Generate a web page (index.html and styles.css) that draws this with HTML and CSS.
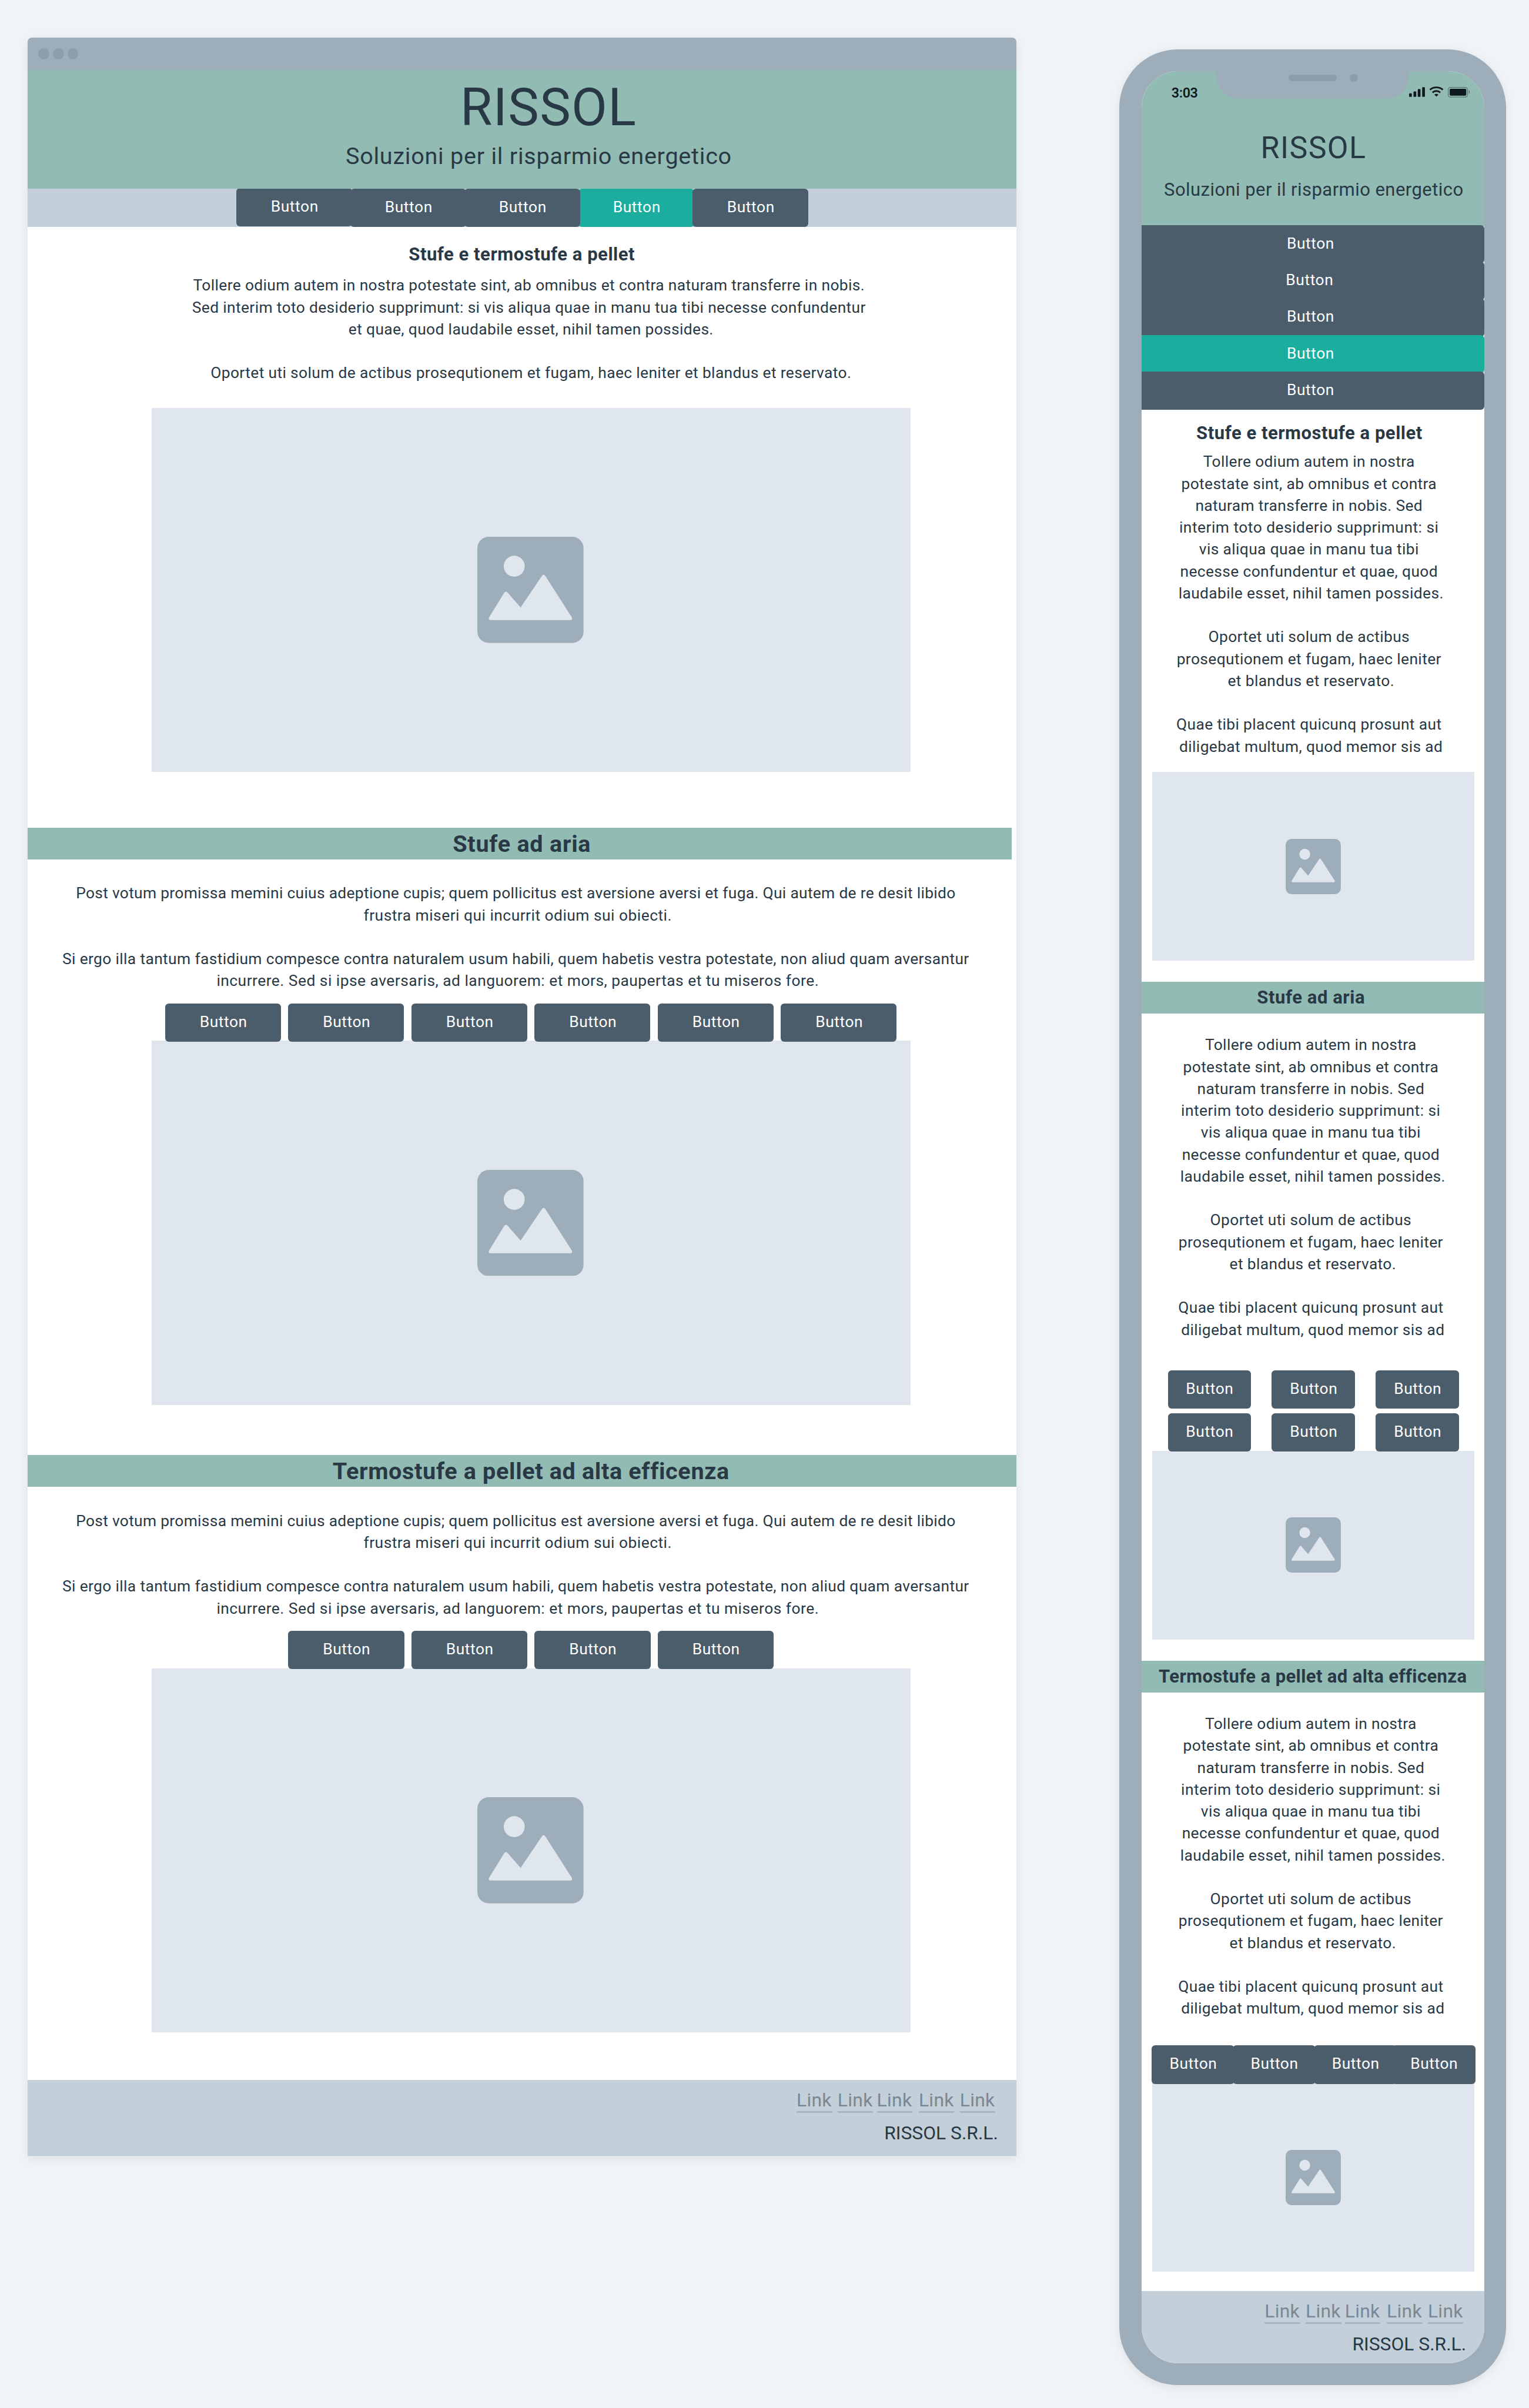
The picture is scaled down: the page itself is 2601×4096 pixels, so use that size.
FILE: index.html
```html
<!DOCTYPE html>
<html lang="it">
<head>
<meta charset="utf-8">
<title>RISSOL</title>
<link rel="stylesheet" href="styles.css">
</head>
<body>
<svg class="defs" aria-hidden="true">
  <symbol id="picture" viewBox="0 0 700 700">
    <rect class="pic-frame" width="700" height="700" rx="76"/>
    <circle class="pic-hole" cx="243" cy="194" r="69"/>
    <path class="pic-hole" d="M88 549H612C623 549 628 539 622 530L448 258C442 248 431 248 425 258L285 466L199 367C193 360 183 360 177 369L77 531C72 540 77 549 88 549Z"/>
  </symbol>
</svg>

<main class="browser">
  <div class="titlebar"><i class="dot"></i><i class="dot"></i><i class="dot"></i></div>
  <header class="hero">
    <h1 class="hero-title">RISSOL</h1>
    <p class="hero-sub">Soluzioni per il risparmio energetico</p>
  </header>
  <nav class="tabs">
    <a class="btn raised">Button</a><a class="btn">Button</a><a class="btn">Button</a><a class="btn active">Button</a><a class="btn">Button</a>
  </nav>

  <h2 class="intro">Stufe e termostufe a pellet</h2>
  <p class="copy">Tollere odium autem in nostra potestate sint, ab omnibus et contra naturam transferre in nobis. 
Sed interim toto desiderio supprimunt: si vis aliqua quae in manu tua tibi necesse confundentur 
et quae, quod laudabile esset, nihil tamen possides.

Oportet uti solum de actibus prosequtionem et fugam, haec leniter et blandus et reservato.</p>
  <div class="image"><svg class="pic"><use href="#picture"/></svg></div>

  <h2 class="banner first">Stufe ad aria</h2>
  <p class="copy wide"><span class="tight">Post votum promissa memini cuius adeptione cupis; quem pollicitus est aversione aversi et fuga. Qui autem de re desit libido </span>
<span class="loose">frustra miseri qui incurrit odium sui obiecti.</span>

Si ergo illa tantum fastidium compesce contra naturalem usum habili, quem habetis vestra potestate, non aliud quam aversantur 
<span class="loose">incurrere. Sed si ipse aversaris, ad languorem: et mors, paupertas et tu miseros fore.</span></p>
  <div class="buttons six">
    <a class="btn">Button</a><a class="btn">Button</a><a class="btn">Button</a><a class="btn">Button</a><a class="btn">Button</a><a class="btn">Button</a>
  </div>
  <div class="image tucked"><svg class="pic"><use href="#picture"/></svg></div>

  <h2 class="banner second">Termostufe a pellet ad alta efficenza</h2>
  <p class="copy wide"><span class="tight">Post votum promissa memini cuius adeptione cupis; quem pollicitus est aversione aversi et fuga. Qui autem de re desit libido </span>
<span class="loose">frustra miseri qui incurrit odium sui obiecti.</span>

Si ergo illa tantum fastidium compesce contra naturalem usum habili, quem habetis vestra potestate, non aliud quam aversantur 
<span class="loose">incurrere. Sed si ipse aversaris, ad languorem: et mors, paupertas et tu miseros fore.</span></p>
  <div class="buttons four">
    <a class="btn">Button</a><a class="btn">Button</a><a class="btn">Button</a><a class="btn">Button</a>
  </div>
  <div class="image tucked"><svg class="pic"><use href="#picture"/></svg></div>

  <footer class="footer">
    <div class="links"><a class="link">Link</a><a class="link">Link</a><a class="link">Link</a><a class="link">Link</a><a class="link">Link</a></div>
    <p class="company">RISSOL S.R.L.</p>
  </footer>
</main>

<section class="phone">
  <div class="screen">
    <svg class="notch" viewBox="0 0 438 60">
      <path class="bezel" d="M0 -2V0C6 0 8 4 8 11C9 40 29 60 58 60H380C409 60 429 40 430 11C430 4 432 0 438 0V-2Z"/>
      <rect class="sensor" x="166" y="8" width="106" height="14" rx="7"/>
      <circle class="sensor" cx="309" cy="15" r="9"/>
    </svg>
    <header class="hero">
      <div class="status">
        <span class="time">3:03</span>
        <svg class="indicators" viewBox="0 0 401 69">
          <rect x="0" y="42" width="18" height="23" rx="5"/>
          <rect x="29" y="29" width="18" height="36" rx="5"/>
          <rect x="57" y="14" width="18" height="51" rx="5"/>
          <rect x="86" y="1" width="18" height="64" rx="5"/>
          <path class="wave" d="M137 18C161 -3 198 -3 222 18"/>
          <path class="wave" d="M154 36C169 23 190 23 205 36"/>
          <path d="M166 50C174 44 185 44 193 50L180 63Z"/>
          <rect class="cell" x="257.500" y="2.500" width="127" height="64" rx="15"/>
          <rect x="267" y="12" width="109" height="45" rx="8"/>
          <path class="nub" d="M393 20C402 26 402 39 393 45Z"/>
        </svg>
      </div>
      <h1 class="hero-title">RISSOL</h1>
      <p class="hero-sub">Soluzioni per il risparmio energetico</p>
    </header>
    <nav class="stack">
      <a class="btn">Button</a><a class="btn broad">Button</a><a class="btn">Button</a><a class="btn active">Button</a><a class="btn">Button</a>
    </nav>

    <h2 class="intro">Stufe e termostufe a pellet</h2>
    <p class="copy lead">Tollere odium autem in nostra 
potestate sint, ab omnibus et contra 
naturam transferre in nobis. Sed 
<span class="loose">interim toto desiderio supprimunt: si </span>
vis aliqua quae in manu tua tibi 
necesse confundentur et quae, quod 
laudabile esset, nihil tamen possides.

Oportet uti solum de actibus 
prosequtionem et fugam, haec leniter 
et blandus et reservato.

Quae tibi placent quicunq prosunt aut 
diligebat multum, quod memor sis ad</p>
    <div class="image"><svg class="pic"><use href="#picture"/></svg></div>

    <h2 class="banner first">Stufe ad aria</h2>
    <p class="copy">Tollere odium autem in nostra 
potestate sint, ab omnibus et contra 
naturam transferre in nobis. Sed 
<span class="loose">interim toto desiderio supprimunt: si </span>
vis aliqua quae in manu tua tibi 
necesse confundentur et quae, quod 
laudabile esset, nihil tamen possides.

Oportet uti solum de actibus 
prosequtionem et fugam, haec leniter 
et blandus et reservato.

Quae tibi placent quicunq prosunt aut 
diligebat multum, quod memor sis ad</p>
    <div class="buttons grid">
      <a class="btn">Button</a><a class="btn">Button</a><a class="btn">Button</a><a class="btn">Button</a><a class="btn">Button</a><a class="btn">Button</a>
    </div>
    <div class="image tucked"><svg class="pic"><use href="#picture"/></svg></div>

    <h2 class="banner">Termostufe a pellet ad alta efficenza</h2>
    <p class="copy">Tollere odium autem in nostra 
potestate sint, ab omnibus et contra 
naturam transferre in nobis. Sed 
<span class="loose">interim toto desiderio supprimunt: si </span>
vis aliqua quae in manu tua tibi 
necesse confundentur et quae, quod 
laudabile esset, nihil tamen possides.

Oportet uti solum de actibus 
prosequtionem et fugam, haec leniter 
et blandus et reservato.

Quae tibi placent quicunq prosunt aut 
diligebat multum, quod memor sis ad</p>
    <div class="buttons joined">
      <a class="btn">Button</a><a class="btn">Button</a><a class="btn">Button</a><a class="btn">Button</a>
    </div>
    <div class="image tucked"><svg class="pic"><use href="#picture"/></svg></div>

    <footer class="footer">
      <div class="links"><a class="link">Link</a><a class="link">Link</a><a class="link">Link</a><a class="link">Link</a><a class="link">Link</a></div>
      <p class="company">RISSOL S.R.L.</p>
    </footer>
  </div>
</section>
</body>
</html>
```
FILE: styles.css
```css
/* 1rem = 10 design units */
html { font-size: 7.76px; }

* { box-sizing: border-box; margin: 0; padding: 0; }

body {
  display: flex;
  align-items: flex-start;
  width: 2601px;
  height: 4096px;
  padding-left: 6rem;
  overflow: hidden;
  background: #f0f4f7;
  color: #293845;
  font-family: Roboto, "Open Sans", sans-serif;
}

.defs { position: absolute; width: 0; height: 0; }
.pic-frame { fill: #9eadba; }
.pic-hole { fill: #dfe6ee; }

/* Frames */
.browser {
  width: 216.8rem;
  height: 464.6rem;
  margin-top: 8.2rem;
  overflow: hidden;
  border-radius: 0.9rem 0.9rem 0 0;
  background: #fff;
  box-shadow: 0 0.4rem 2rem rgba(0, 0, 0, 0.08);
}

.titlebar {
  display: flex;
  align-items: center;
  gap: 0.8rem;
  height: 7.2rem;
  padding-left: 2.4rem;
  background: #9eadba;
}

.dot { width: 2.4rem; height: 2.4rem; border-radius: 50%; background: #8e9dab; }

.phone {
  width: 84.8rem;
  height: 512rem;
  margin: 10.8rem 0 0 22.6rem;
  padding: 4.8rem;
  border-radius: 12.8rem;
  background: #9eadba;
  box-shadow: 0 0.4rem 2rem rgba(0, 0, 0, 0.08);
}

.screen {
  position: relative;
  height: 502.4rem;
  overflow: hidden;
  border-radius: 8rem;
  background: #fff;
}

/* Header */
.hero { background: #91bbb3; text-align: center; }
.hero-title, .hero-sub { font-weight: 400; white-space: nowrap; }

.browser .hero { height: 26rem; padding-top: 2.5rem; }
.browser .hero-title { padding-left: 11.7rem; font-size: 11.4rem; line-height: 11.4rem; letter-spacing: 0.0157em; }
.browser .hero-sub { margin-top: 2rem; padding-left: 7.4rem; font-size: 5.1rem; line-height: 6rem; letter-spacing: 0.019em; }

.screen .hero { height: 34rem; }
.screen .hero-title { padding-left: 0.3rem; font-size: 6.7rem; line-height: 7.2rem; letter-spacing: 0.026em; }
.screen .hero-sub { margin-top: 3.12rem; padding-left: 0.4rem; font-size: 4rem; line-height: 4.8rem; letter-spacing: 0.0139em; }

/* Status bar */
.status {
  display: flex;
  justify-content: space-between;
  align-items: flex-start;
  height: 13.21rem;
  padding: 2.77rem 3.13rem 0 6.6rem;
}

.time { color: #10181f; font-size: 3rem; font-weight: 600; line-height: 4rem; letter-spacing: -0.015em; }
.indicators { width: 13.37rem; height: 2.3rem; margin-top: 0.73rem; overflow: visible; fill: #10181f; }
.indicators .wave { fill: none; stroke: #10181f; stroke-width: 11; }
.indicators .cell { fill: none; stroke: #5a736f; stroke-width: 5; }
.indicators .nub { fill: #5a736f; }

.notch { position: absolute; top: 0; left: 15.6rem; width: 43.8rem; height: 6rem; overflow: visible; }
.bezel { fill: #9eadba; }
.sensor { fill: #8e9dab; }

/* Buttons */
.btn {
  position: relative;
  display: block;
  flex: none;
  width: 25.4rem;
  height: 8.4rem;
  padding-left: 0.2rem;
  border-radius: 0.8rem;
  background: #4b5c6b;
  color: #fff;
  font-size: 3.4rem;
  font-weight: 450;
  line-height: 8.2rem;
  letter-spacing: 0.022em;
  text-align: center;
}

.btn.active { background: #1bae9f; }

.tabs { display: flex; height: 8.4rem; padding-left: 45.8rem; overflow: hidden; background: #c3cfd9; }
.tabs .btn { z-index: 1; }
.tabs .btn + .btn { margin-left: -0.4rem; }
.tabs .active { z-index: 0; }
.tabs .raised { margin-top: -0.2rem; }

.stack { margin-top: -0.2rem; }
.stack .btn { width: 76.4rem; margin-left: -1.2rem; }
.stack .btn + .btn { margin-top: -0.4rem; }
.stack .broad { width: 76.8rem; margin-left: -1.6rem; }

.buttons { position: relative; z-index: 1; display: flex; gap: 1.6rem; }
.buttons.six { margin: 2.46rem 0 0 30.2rem; }
.buttons.four { margin: 2.46rem 0 0 57.2rem; }

.buttons.grid {
  display: grid;
  grid-template-columns: repeat(3, 18.2rem);
  gap: 1rem 4.6rem;
  margin: 6.46rem 0 0 5.8rem;
}

.buttons.joined { gap: 0; margin: 5.66rem 0 0 2.2rem; }
.screen .buttons .btn { width: 18.2rem; }
.joined .btn + .btn { margin-left: -0.4rem; }
.joined .btn:last-child { margin-left: -1rem; }

/* Text */
.intro { font-size: 4rem; font-weight: 700; line-height: 4.8rem; letter-spacing: 0.0165em; text-align: center; }
.browser .intro { padding-top: 3.53rem; }
.screen .intro { padding: 2.73rem 1.5rem 0 0; }

.copy { font-size: 3.4rem; line-height: 4.8rem; letter-spacing: 0.0138em; text-align: center; white-space: pre; }
.browser .copy { margin-top: 2.11rem; padding-left: 4rem; }
.browser .copy.wide { margin-top: 5.09rem; padding: 0 1.8rem 0 0; }
.screen .copy { margin-top: 4.54rem; }
.screen .copy.lead { margin-top: 1.56rem; padding-right: 0.8rem; }
.tight { letter-spacing: 0.0115em; }
.loose { letter-spacing: 0.0183em; }

.banner { height: 7rem; background: #91bbb3; font-weight: 700; text-align: center; white-space: nowrap; }
.browser .banner { font-size: 5.1rem; line-height: 7.2rem; letter-spacing: 0.0165em; }
.browser .banner.first { width: 215.8rem; margin-top: 12.2rem; padding-left: 1rem; letter-spacing: 0.019em; }
.browser .banner.second { margin-top: 11rem; padding-left: 4rem; letter-spacing: 0.0165em; }
.screen .banner { margin-top: 4.6rem; font-size: 4rem; line-height: 7rem; letter-spacing: 0.012em; }
.screen .banner.first { padding-right: 0.8rem; letter-spacing: 0.0175em; }

/* Image placeholders */
.image { display: flex; align-items: center; justify-content: center; background: #dfe6ee; }
.browser .image { width: 166.4rem; height: 79.8rem; margin: 5.16rem 0 0 27.2rem; padding-right: 0.2rem; }
.screen .image { width: 70.6rem; height: 41.4rem; margin: 3.11rem 0 0 2.4rem; }
.browser .image.tucked, .screen .image.tucked { margin-top: -0.2rem; }
.browser .pic { width: 23.3rem; height: 23.3rem; }
.screen .pic { width: 12.1rem; height: 12.1rem; }

/* Footer */
.footer { display: flex; flex-direction: column; align-items: flex-end; padding-right: 4.6rem; background: #c3cfd9; }
.browser .footer { height: 16.8rem; margin-top: 10.45rem; }
.screen .footer { height: 15.8rem; margin-top: 4.2rem; }

.links { display: flex; gap: 1.2rem; padding-top: 1.6rem; }

.link {
  width: 7.8rem;
  height: 5.6rem;
  border-bottom: 0.4rem solid #a8b5c1;
  color: #788896;
  font-size: 4.1rem;
  line-height: 5.8rem;
  letter-spacing: 0.01em;
  white-space: nowrap;
}

.link:nth-child(3) { margin-left: -0.4rem; }
.link:nth-child(4) { margin-left: 0.2rem; }

.company { margin: 1.6rem -0.6rem 0 0; font-size: 4.1rem; line-height: 5.8rem; }
```
